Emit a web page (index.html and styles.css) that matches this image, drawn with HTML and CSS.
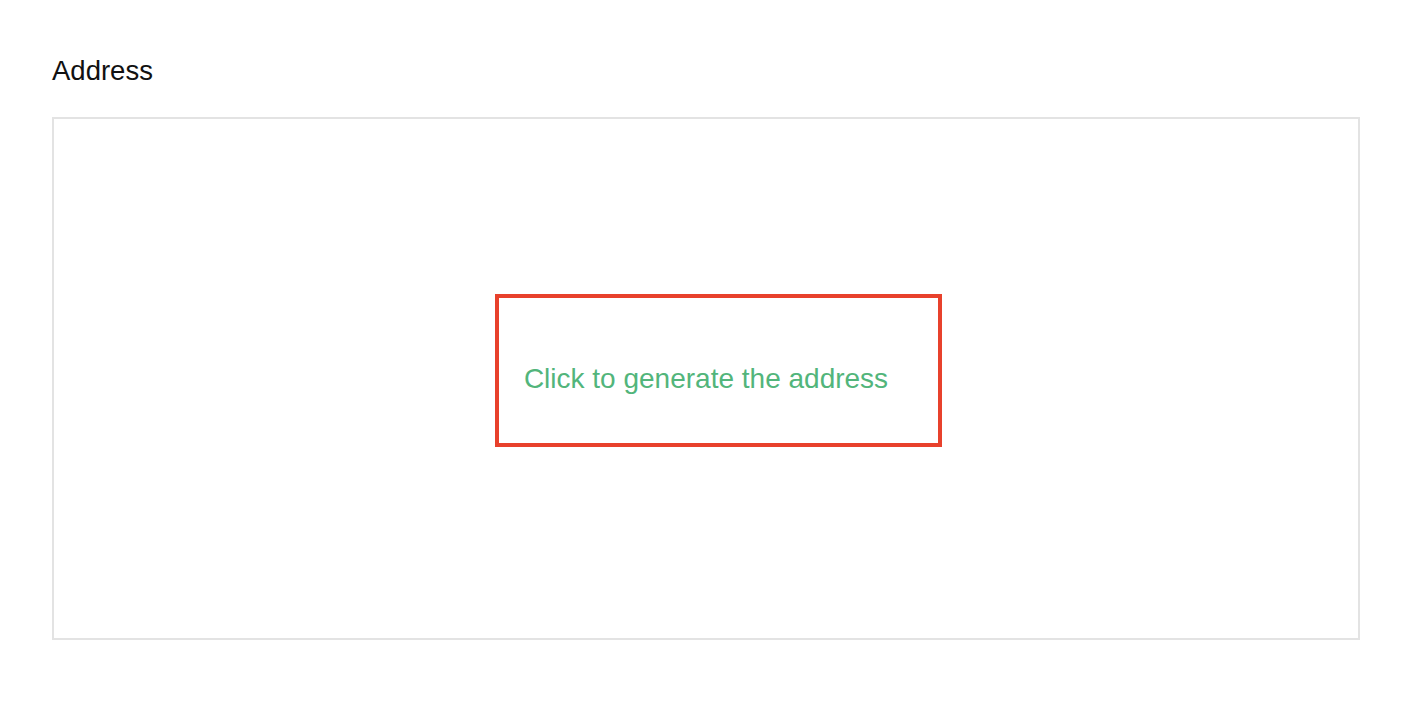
FILE: index.html
```html
<html>
<head>
  <meta http-equiv="Content-Type" content="text/html; charset=UTF-8"/>
  <title>Address</title>
  <link rel="stylesheet" href="styles.css">
</head>

<body>
<div class="page">
  <div class="label">Address</div>

  <div class="panel">
    <div class="generate">
      <span class="link">Click to generate the address</span>
    </div>
  </div>
</div>
</body>
</html>
```

FILE: styles.css
```css
body {margin: 0; background: #ffffff; font-family: "Liberation Sans", Arial, sans-serif}
div.page {padding: 55px 64px 0 52px}
div.label {font-size: 27.5px; line-height: 32px; color: #111111; margin-bottom: 30px}
div.panel {height: 523px; box-sizing: border-box; border: 2px solid #e3e3e3; display: flex; align-items: center; justify-content: center; padding: 0 0 16px 25px}
div.generate {border: 4px solid #e8412c; padding: 65px 50px 48px 25px}
span.link {display: block; font-size: 28px; line-height: 32px; color: #52b57b; white-space: nowrap}
```
